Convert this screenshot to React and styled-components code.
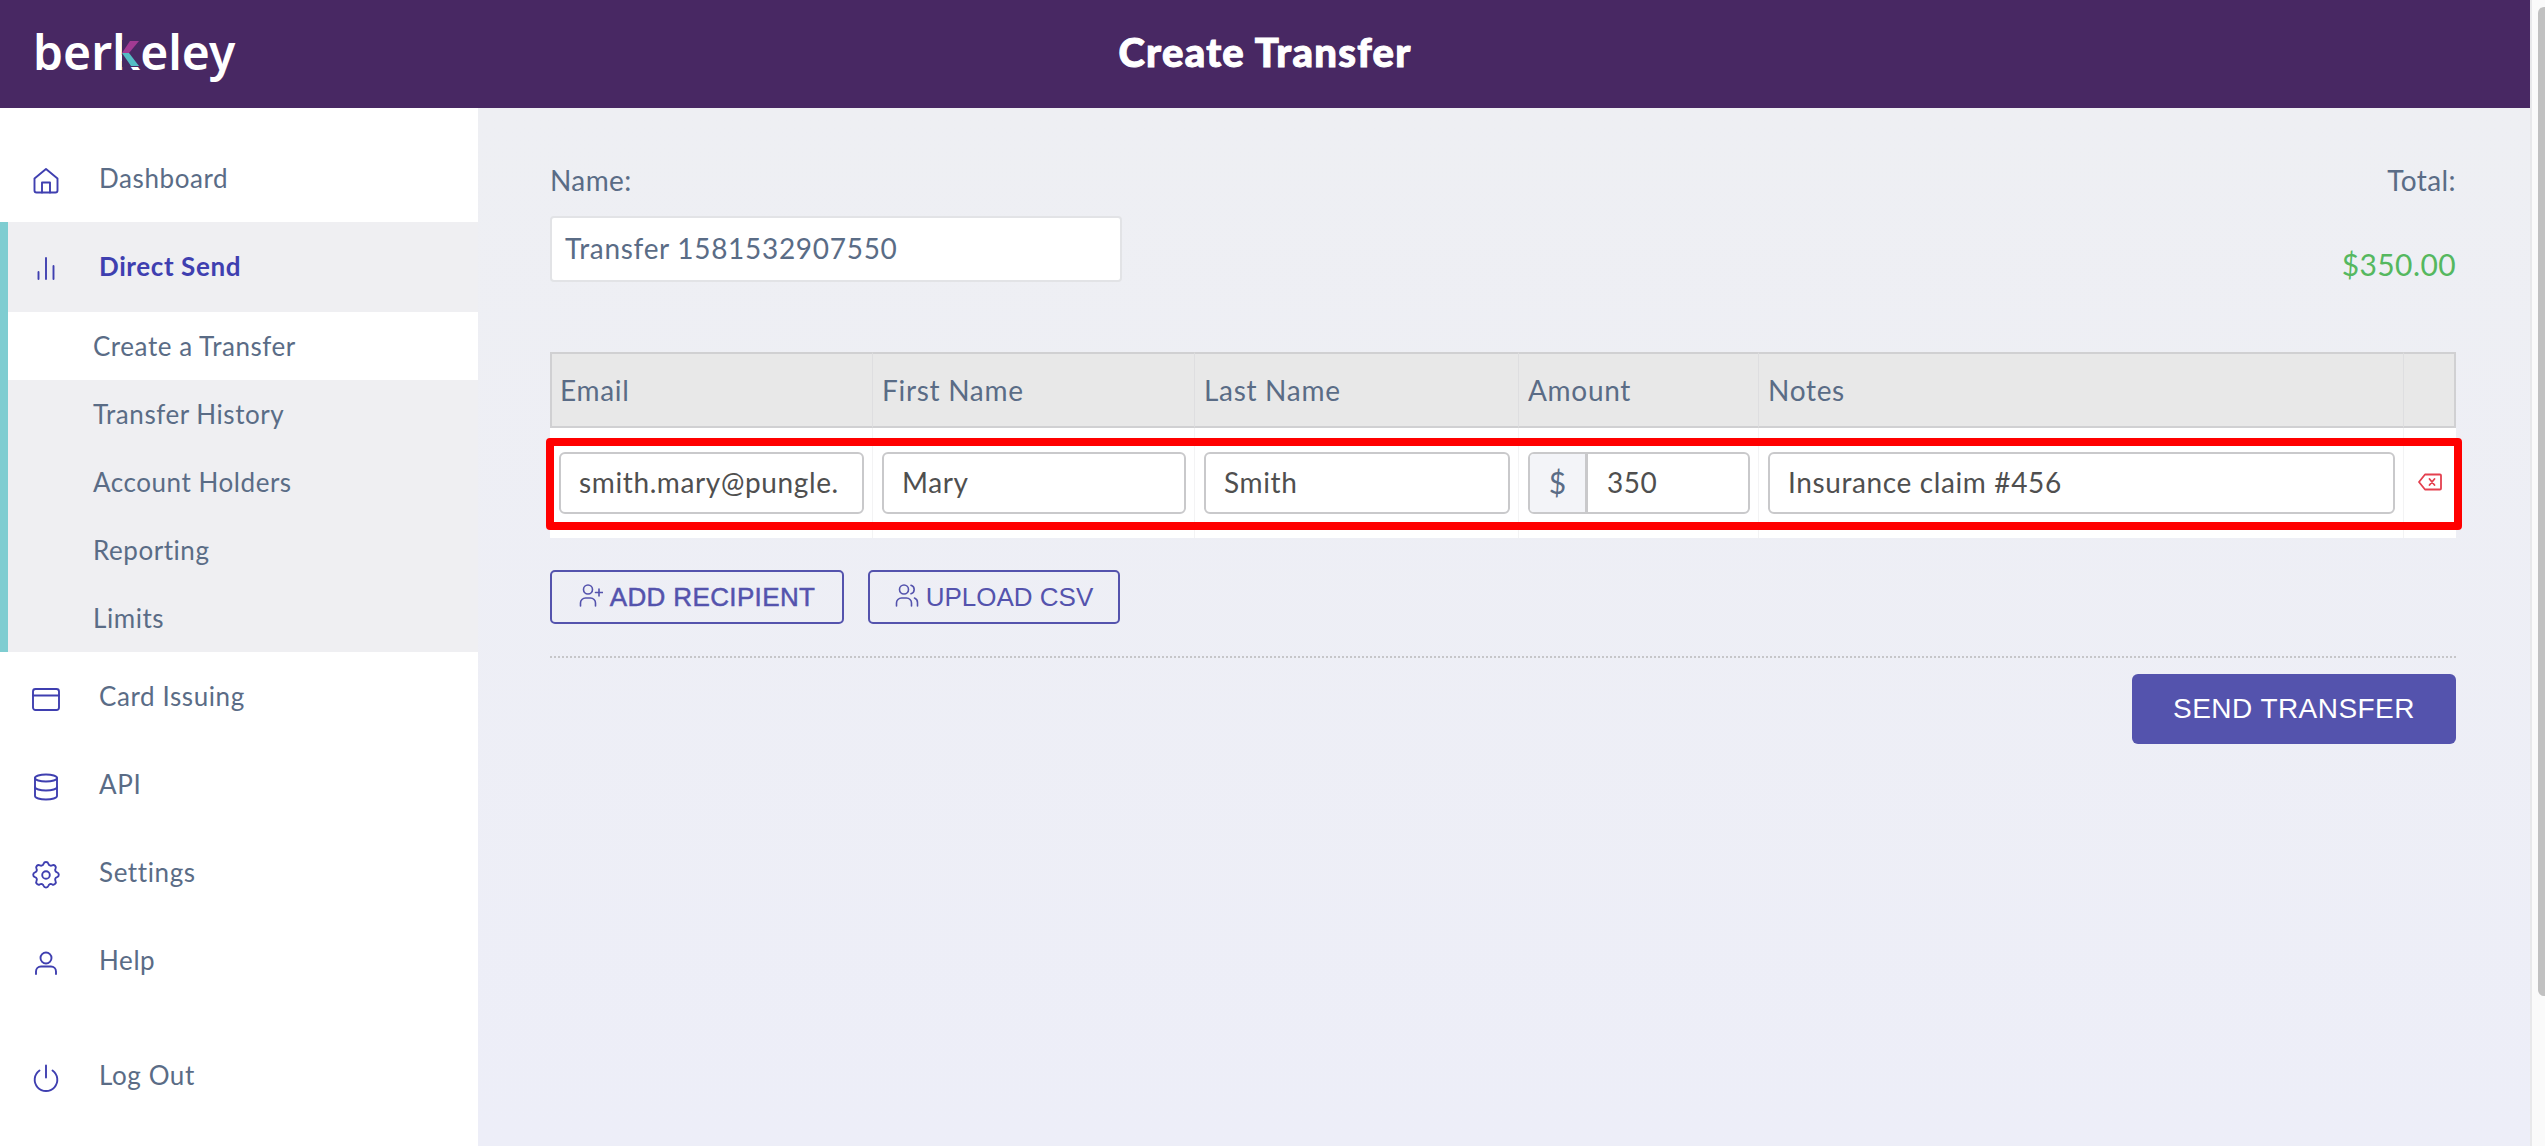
import React from 'react';
import styled, { createGlobalStyle } from 'styled-components';

const TEXT = '#5a6c86';
const INDIGO = '#3f3fb0';
const HEADER_BG = '#482863';
const UI_FONT = `Lato, 'Noto Sans', sans-serif`;

const GlobalStyle = createGlobalStyle`
  html, body {
    margin: 0;
    padding: 0;
    height: 100%;
    overflow: hidden;
    font-family: ${UI_FONT};
  }
  * {
    box-sizing: border-box;
  }
`;

const Page = styled.div`
  display: flex;
  width: 2545px;
  height: 1146px;
`;

const Viewport = styled.div`
  width: 2530px;
  display: flex;
  flex-direction: column;
`;

const ScrollTrack = styled.div`
  width: 15px;
  padding: 7px 0 150px 6px;
  display: flex;
  background: #fafafa;
  border-left: 2px solid #e8e8ea;
`;

const ScrollThumb = styled.div`
  flex: 1;
  background: #c1c1c1;
  border-radius: 6px 0 0 6px;
`;

const Header = styled.header`
  height: 108px;
  padding-bottom: 4px;
  background: ${HEADER_BG};
  display: grid;
  grid-template-columns: 1fr auto 1fr;
  align-items: center;
`;

const Logo = styled.div`
  display: flex;
  align-items: baseline;
  padding-left: 33px;
  font-family: 'Noto Sans', sans-serif;
  font-weight: 600;
  font-size: 48px;
  line-height: 1;
  color: #fff;
`;

const LogoK = styled.span`
  position: relative;
  display: inline-block;
`;

// coloured arms painted over the right side of the k
const LogoArms = styled.svg`
  position: absolute;
  left: 10px;
  bottom: 9px;
  width: 18px;
  height: 27px;
`;

const Title = styled.h1`
  margin: 0;
  font-size: 40px;
  font-weight: 900;
  letter-spacing: 1.3px;
  -webkit-text-stroke: 1px #fff;
  color: #fff;
  white-space: nowrap;
`;

const Body = styled.div`
  flex: 1;
  display: flex;
  min-height: 0;
`;

const Sidebar = styled.nav`
  width: 478px;
  background: #fff;
  padding-top: 26px;
  display: flex;
  flex-direction: column;
`;

const NavRow = styled.div`
  height: ${p => (p.$tall ? 90 : 88)}px;
  display: flex;
  align-items: center;
  background: ${p => (p.$active ? '#efeff2' : 'transparent')};
  padding-left: ${p => (p.$active ? 24 : 32)}px;
  margin-top: ${p => (p.$pushed ? 27 : 0)}px;
`;

const NavIcon = styled.svg`
  width: 28px;
  height: 28px;
  margin-top: 6px;
  fill: none;
  stroke: ${INDIGO};
  stroke-width: 1.9;
  stroke-linecap: round;
  stroke-linejoin: round;
  flex-shrink: 0;
`;

const NavLabel = styled.span`
  margin-left: 39px;
  margin-top: ${p => (p.$active ? -2 : 0)}px;
  font-size: 26px;
  letter-spacing: 0.6px;
  font-weight: ${p => (p.$active ? 700 : 400)};
  color: ${p => (p.$active ? INDIGO : TEXT)};
`;

const SubMenu = styled.div`
  border-left: 8px solid #7ecdd1;
  background: #efeff2;
`;

const SubItem = styled.div`
  height: 68px;
  display: flex;
  align-items: center;
  padding-left: 85px;
  font-size: 26px;
  letter-spacing: 0.55px;
  color: ${TEXT};
  background: ${p => (p.$current ? '#fff' : 'transparent')};
`;

const Main = styled.main`
  flex: 1;
  padding: 54px 74px 0 72px;
  background: linear-gradient(180deg, #eeeff3 0%, #edeef8 100%);
`;

const Summary = styled.div`
  display: flex;
  justify-content: space-between;
  height: 190px;
`;

const NameField = styled.div`
  display: flex;
  flex-direction: column;
`;

const TotalField = styled.div`
  display: flex;
  flex-direction: column;
  align-items: flex-end;
`;

const FieldLabel = styled.label`
  font-size: 28px;
  letter-spacing: 0.4px;
  line-height: 36px;
  color: ${TEXT};
`;

const NameInput = styled.div`
  margin-top: 18px;
  width: 572px;
  height: 66px;
  display: flex;
  align-items: center;
  padding: 0 0 2px 13px;
  background: #fff;
  border: 2px solid #e2e3e6;
  border-radius: 4px;
  font-size: 28px;
  letter-spacing: 0.7px;
  color: ${TEXT};
`;

const TotalAmount = styled.div`
  margin-top: 48px;
  font-size: 30px;
  letter-spacing: 0.4px;
  line-height: 36px;
  color: #55b85f;
`;

const Table = styled.div`
  position: relative;
  display: grid;
  grid-template-columns: 323px 322px 324px 240px 645px 52px;
  grid-template-rows: 76px 110px;
`;

const HeadCell = styled.div`
  display: flex;
  align-items: center;
  padding-left: 9px;
  font-size: 28px;
  letter-spacing: 0.7px;
  color: ${TEXT};
  background: #e8e8e8;
  border-top: 2px solid #d0d0d2;
  border-bottom: 2px solid #d0d0d2;
  border-right: 1px solid #dedee0;
  &:first-child {
    border-left: 2px solid #d0d0d2;
    padding-left: 8px;
  }
  &:nth-child(6) {
    border-right: 2px solid #d0d0d2;
  }
`;

const BodyCell = styled.div`
  display: flex;
  align-items: center;
  justify-content: ${p => (p.$center ? 'center' : 'stretch')};
  padding: 0 ${p => (p.$center ? 0 : 8)}px 0 ${p => (p.$center ? 0 : 9)}px;
  background: #fff;
  border-right: ${p => (p.$center ? 'none' : '1px solid #f3f3f4')};
`;

const TextInput = styled.div`
  flex: 1;
  min-width: 0;
  height: 62px;
  display: flex;
  align-items: center;
  padding: 0 6px 2px 18px;
  overflow: hidden;
  white-space: nowrap;
  background: #fff;
  border: 2px solid #c9c9cb;
  border-radius: 6px;
  font-size: 28px;
  letter-spacing: 0.62px;
  color: #4f4f4f;
`;

const AmountGroup = styled.div`
  flex: 1;
  height: 62px;
  display: flex;
  overflow: hidden;
  border: 2px solid #c9c9cb;
  border-radius: 6px;
`;

const Currency = styled.div`
  width: 58px;
  display: flex;
  align-items: center;
  justify-content: center;
  padding-bottom: 2px;
  background: #f3f4f8;
  border-right: 3px solid #c9c9cb;
  font-size: 30px;
  color: ${TEXT};
`;

const AmountValue = styled.div`
  flex: 1;
  display: flex;
  align-items: center;
  padding: 0 0 2px 19px;
  font-size: 28px;
  letter-spacing: 0.5px;
  color: #4f4f4f;
`;

const DeleteIcon = styled.svg`
  width: 24px;
  height: 18px;
  margin-top: -2px;
  fill: none;
  stroke: #e4404f;
  stroke-width: 1.8;
  stroke-linejoin: round;
  stroke-linecap: round;
`;

// red annotation drawn over the recipient row of the screenshot
const Highlight = styled.div`
  position: absolute;
  left: -4px;
  right: -6px;
  top: 86px;
  height: 92px;
  border: 8px solid #ff0000;
  border-radius: 4px;
  pointer-events: none;
`;

const Actions = styled.div`
  display: flex;
  gap: 24px;
  margin-top: 32px;
`;

const OutlineButton = styled.button`
  height: 54px;
  width: ${p => p.$width}px;
  display: flex;
  align-items: center;
  justify-content: center;
  gap: 7px;
  padding: 0;
  background: transparent;
  border: 2px solid #5453ad;
  border-radius: 5px;
  font-family: 'Liberation Sans', Arial, sans-serif;
  font-size: 26px;
  font-weight: 400;
  letter-spacing: ${p => (p.$strong ? 0.37 : 0)}px;
  -webkit-text-stroke: ${p => (p.$strong ? '0.5px #5453ad' : '0')};
  color: #5453ad;
`;

const ButtonIcon = styled.svg`
  width: 24px;
  height: 24px;
  margin-top: -5px;
  fill: none;
  stroke: #5453ad;
  stroke-width: 1.6;
  stroke-linecap: round;
  stroke-linejoin: round;
`;

const Divider = styled.div`
  margin-top: 32px;
  border-top: 2px dotted #c6c6c9;
`;

const Footer = styled.div`
  display: flex;
  justify-content: flex-end;
  margin-top: 16px;
`;

const SendButton = styled.button`
  width: 324px;
  height: 70px;
  background: #5453ad;
  border: none;
  border-radius: 6px;
  font-family: 'Liberation Sans', Arial, sans-serif;
  font-size: 28px;
  letter-spacing: 0.45px;
  color: #fff;
`;

const Icons = {
  home: (
    <>
      <path d="M2.500 11.500 14 2l11.500 9.500v12a2 2 0 0 1-2 2h-19a2 2 0 0 1-2-2z" />
      <path d="M10 25.500V15.500h8v10" />
    </>
  ),
  bars: (
    <>
      <path d="M6.500 23v-7" />
      <path d="M14 23V2" />
      <path d="M21.500 23V10" />
    </>
  ),
  card: (
    <>
      <rect x="1" y="4" width="26" height="21" rx="2.500" />
      <path d="M1 10.500h26" />
    </>
  ),
  database: (
    <>
      <ellipse cx="14" cy="5" rx="11" ry="3.500" />
      <path d="M3 5v18c0 2 5 3.500 11 3.500s11-1.500 11-3.500V5" />
      <path d="M3 14c0 2 5 3.500 11 3.500s11-1.500 11-3.500" />
    </>
  ),
  gear: (
    <>
      <circle cx="14" cy="14" r="3.800" />
      <path d="M11.600 2.800a2.500 2.500 0 0 1 4.800 0 2.500 2.500 0 0 0 3.700 1.500 2.500 2.500 0 0 1 3.400 3.400 2.500 2.500 0 0 0 1.500 3.700 2.500 2.500 0 0 1 0 4.800 2.500 2.500 0 0 0-1.500 3.700 2.500 2.500 0 0 1-3.400 3.400 2.500 2.500 0 0 0-3.700 1.500 2.500 2.500 0 0 1-4.800 0 2.500 2.500 0 0 0-3.700-1.500 2.500 2.500 0 0 1-3.400-3.400A2.500 2.500 0 0 0 3 16.200a2.500 2.500 0 0 1 0-4.800 2.500 2.500 0 0 0 1.500-3.700 2.500 2.500 0 0 1 3.400-3.400 2.500 2.500 0 0 0 3.700-1.500z" />
    </>
  ),
  user: (
    <>
      <circle cx="14" cy="9" r="5.500" />
      <path d="M4 25v-2.500a5 5 0 0 1 5-5h10a5 5 0 0 1 5 5V25" />
    </>
  ),
  power: (
    <>
      <path d="M14 1.500v12" />
      <path d="M7.500 6.500a11.300 11.300 0 1 0 13 0" />
    </>
  ),
};

const NavItem = ({ icon, label, active, pushed, tall }) => (
  <NavRow $active={active} $pushed={pushed} $tall={tall}>
    <NavIcon viewBox="0 0 28 28">{Icons[icon]}</NavIcon>
    <NavLabel $active={active}>{label}</NavLabel>
  </NavRow>
);

const COLUMNS = ['Email', 'First Name', 'Last Name', 'Amount', 'Notes', ''];
const SUB_ITEMS = ['Create a Transfer', 'Transfer History', 'Account Holders', 'Reporting', 'Limits'];

const App = () => (
  <Page>
    <GlobalStyle />
    <Viewport>
      <Header>
        <Logo>
          ber
          <LogoK>
            k
            <LogoArms viewBox="0 0 18 27">
              <rect width="18" height="27" fill={HEADER_BG} />
              <polygon points="0,13 8,1 17,1 7,13" fill="#a23a93" />
              <polygon points="0,13 7,13 17,26 9,26" fill="#55bcc4" />
            </LogoArms>
          </LogoK>
          eley
        </Logo>
        <Title>Create Transfer</Title>
      </Header>
      <Body>
        <Sidebar>
          <NavItem icon="home" label="Dashboard" />
          <SubMenu>
            <NavItem icon="bars" label="Direct Send" active tall />
            {SUB_ITEMS.map((item, i) => (
              <SubItem key={item} $current={i === 0}>
                {item}
              </SubItem>
            ))}
          </SubMenu>
          <NavItem icon="card" label="Card Issuing" />
          <NavItem icon="database" label="API" />
          <NavItem icon="gear" label="Settings" />
          <NavItem icon="user" label="Help" />
          <NavItem icon="power" label="Log Out" pushed />
        </Sidebar>
        <Main>
          <Summary>
            <NameField>
              <FieldLabel>Name:</FieldLabel>
              <NameInput>Transfer 1581532907550</NameInput>
            </NameField>
            <TotalField>
              <FieldLabel>Total:</FieldLabel>
              <TotalAmount>$350.00</TotalAmount>
            </TotalField>
          </Summary>
          <Table>
            {COLUMNS.map((col, i) => (
              <HeadCell key={i}>{col}</HeadCell>
            ))}
            <BodyCell>
              <TextInput>smith.mary@pungle.</TextInput>
            </BodyCell>
            <BodyCell>
              <TextInput>Mary</TextInput>
            </BodyCell>
            <BodyCell>
              <TextInput>Smith</TextInput>
            </BodyCell>
            <BodyCell>
              <AmountGroup>
                <Currency>$</Currency>
                <AmountValue>350</AmountValue>
              </AmountGroup>
            </BodyCell>
            <BodyCell>
              <TextInput>Insurance claim #456</TextInput>
            </BodyCell>
            <BodyCell $center>
              <DeleteIcon viewBox="0 0 24 18">
                <path d="M1 9 7 1.500h15a1 1 0 0 1 1 1v13a1 1 0 0 1-1 1H7z" />
                <path d="m11.500 6 5 6M16.500 6l-5 6" />
              </DeleteIcon>
            </BodyCell>
            <Highlight />
          </Table>
          <Actions>
            <OutlineButton $width={294} $strong>
              <ButtonIcon viewBox="0 0 24 24">
                <circle cx="9" cy="6.500" r="4.500" />
                <path d="M1.500 23v-3a5 5 0 0 1 5-5h5a5 5 0 0 1 5 5v3" />
                <path d="M20 6v7M16.500 9.500h7" />
              </ButtonIcon>
              ADD RECIPIENT
            </OutlineButton>
            <OutlineButton $width={252}>
              <ButtonIcon viewBox="0 0 24 24">
                <circle cx="9" cy="6.500" r="4.500" />
                <path d="M1.500 23v-3a5 5 0 0 1 5-5h5a5 5 0 0 1 5 5v3" />
                <path d="M16 2.200a4.500 4.500 0 0 1 0 8.600M19.500 15a5 5 0 0 1 3 4.600V23" />
              </ButtonIcon>
              UPLOAD CSV
            </OutlineButton>
          </Actions>
          <Divider />
          <Footer>
            <SendButton>SEND TRANSFER</SendButton>
          </Footer>
        </Main>
      </Body>
    </Viewport>
    <ScrollTrack>
      <ScrollThumb />
    </ScrollTrack>
  </Page>
);

export default App;
